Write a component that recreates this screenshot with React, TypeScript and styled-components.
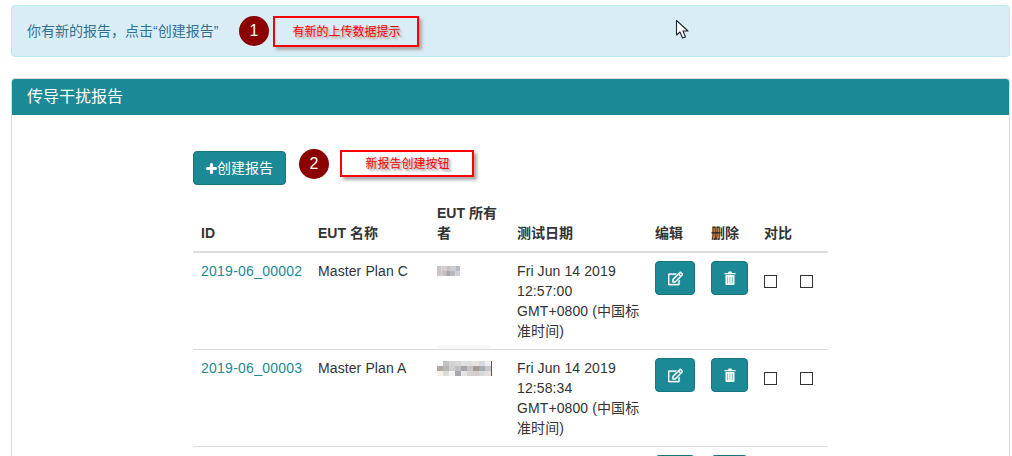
import styled, { createGlobalStyle } from 'styled-components';
import { FaPlus, FaRegEdit } from 'react-icons/fa';

const teal = '#1b8a96';

const GlobalStyle = createGlobalStyle`
  html, body {
    margin: 0;
    height: 456px;
    overflow: hidden;
    background: #fff;
    font-family: "Liberation Sans", "Noto Sans CJK SC", sans-serif;
    font-size: 14px;
    line-height: 20px;
    color: #333;
  }
  * { box-sizing: border-box; }
`;

const Page = styled.div`
  position: relative;
  height: 456px;
  overflow: hidden;
  padding: 5px 2px 0 11px;
`;

const Alert = styled.div`
  height: 52px;
  padding: 15px;
  background: #d9edf7;
  border: 1px solid #bce8f1;
  border-radius: 4px;
  color: #31708f;
  margin-bottom: 21px;
`;

const Panel = styled.section`
  border: 1px solid #ddd;
  border-bottom: 0;
  border-radius: 4px 4px 0 0;
  height: 400px;
`;

const PanelHeading = styled.h3`
  margin: 0;
  height: 36px;
  padding: 9px 15px;
  background: ${teal};
  border-radius: 3px 3px 0 0;
  color: #fff;
  font-size: 16px;
  font-weight: 400;
  line-height: 18px;
`;

const PanelBody = styled.div`
  padding: 36px 0 0 181px;
`;

const CreateButton = styled.button`
  display: flex;
  align-items: center;
  width: 93px;
  height: 34px;
  padding: 0 0 0 12px;
  margin-bottom: 10px;
  background: ${teal};
  border: 1px solid #16757f;
  border-radius: 4px;
  color: #fff;
  font: inherit;
  white-space: nowrap;
  svg { font-size: 11px; flex: none; stroke: currentColor; stroke-width: 50px; }
`;

const Table = styled.table`
  width: 635px;
  table-layout: fixed;
  border-collapse: collapse;
  border-spacing: 0;
`;

const Th = styled.th`
  padding: 8px;
  text-align: left;
  vertical-align: bottom;
  border-bottom: 2px solid #ddd;
  font-weight: 700;
`;

const Td = styled.td`
  position: relative;
  padding: 8px;
  vertical-align: top;
  border-top: 1px solid #ddd;
  height: 97px;
  letter-spacing: 0.1px;
`;

const DateCell = styled(Td)`
  padding-right: 4px;
`;

const ReportLink = styled.a`
  color: ${teal};
  text-decoration: none;
  letter-spacing: 0.25px;
  white-space: nowrap;
`;

const IconButton = styled.button<{ $width: number }>`
  display: flex;
  align-items: center;
  justify-content: center;
  width: ${(p) => p.$width}px;
  height: 34px;
  padding: 0;
  background: ${teal};
  border: 1px solid #16757f;
  border-radius: 4px;
  color: #fff;
  svg.edit { font-size: 15px; stroke: currentColor; stroke-width: 12px; }
`;

const CheckGroup = styled.div`
  display: flex;
  gap: 23px;
  margin-top: 14px;
`;

const Check = styled.span`
  width: 13px;
  height: 13px;
  border: 1px solid #333;
  background: #fff;
`;

const Mosaic = styled.svg<{ $top: number }>`
  display: block;
  margin-top: ${(p) => p.$top}px;
`;

// pale band left by the blur box just above the row line
const Smudge = styled.span`
  position: absolute;
  left: 8px;
  bottom: 0;
  width: 54px;
  height: 4px;
  background: #f8f8f8;
`;

const Badge = styled.span<{ $x: number; $y: number }>`
  position: absolute;
  left: ${(p) => p.$x}px;
  top: ${(p) => p.$y}px;
  width: 30px;
  height: 30px;
  border-radius: 50%;
  background: #8b0000;
  color: #fff;
  font-size: 16px;
  line-height: 29px;
  text-align: center;
`;

const Note = styled.div<{ $x: number; $y: number; $w: number; $h: number }>`
  position: absolute;
  left: ${(p) => p.$x}px;
  top: ${(p) => p.$y}px;
  width: ${(p) => p.$w}px;
  height: ${(p) => p.$h}px;
  padding: 1px 0 0 1px;
  border: 2px solid #f00;
  box-shadow: 3px 3px 3px #a9a9a9;
  color: #f00;
  font-size: 12px;
  line-height: ${(p) => p.$h - 4}px;
  text-align: center;
  text-shadow: 1px 1px 0 #c4c4c4, 2px 2px 1px #c4c4c4, 3px 3px 2px #ccc;
`;

const Cursor = styled.svg`
  position: absolute;
  left: 675px;
  top: 19px;
`;

const rows = [
  { id: '2019-06_00002', name: 'Master Plan C', time: '12:57:00', owner: 'short' },
  { id: '2019-06_00003', name: 'Master Plan A', time: '12:58:34', owner: 'long' },
];

const shortCells = ['#c9c5c4', '#d4cfcf', '#c8bfc0', '#c5ced2', '#bdb9c0', '#cbc6c4', '#c6c1c0', '#aca5a9', '#b3b8bb', '#ccced4'];
const longCells = [
  '#fafafa', '#bfc3c8', '#d5d2d2', '#d8d5d5', '#e0e0e3', '#dfdfe2', '#e6e2de', '#d6dae0', '#eeeeee',
  '#b0a8a4', '#b5b5b8', '#cfcccc', '#c0bfc2', '#a5a5ab', '#c5c3c3', '#a69a94', '#a7adb3', '#c9c7c5',
  '#f5f0e8', '#d9ddd6', '#f2f2f2', '#aaa6b0', '#e2e4e6', '#d6d2d0', '#d2cfcd', '#d8d8d8', '#e2e0dc',
];

function OwnerMosaic({ kind }: { kind: string }) {
  const short = kind === 'short';
  const cells = short ? shortCells : longCells;
  const cols = short ? 5 : 9;
  const w = short ? 4.6 : 6;
  const h = 5;
  return (
    <Mosaic $top={short ? 5 : 3} width={cols * w + 2} height={(cells.length / cols) * h}>
      {cells.map((fill, i) => (
        <rect
          key={i}
          x={(i % cols) * w}
          y={Math.floor(i / cols) * h}
          width={w}
          height={h}
          fill={fill}
        />
      ))}
      {!short && <rect x={54} y={0} width={1} height={15} fill="#3a5a8c" />}
    </Mosaic>
  );
}

function TrashIcon() {
  return (
    <svg width="12" height="14" viewBox="0 0 12 14">
      <path d="M4 2 L4.6 0.6 H7.4 L8 2 H11.5 V3.2 H0.5 V2 Z" fill="currentColor" />
      <path d="M1.5 4 H10.5 V13 Q10.5 14 9.5 14 H2.5 Q1.5 14 1.5 13 Z" fill="currentColor" />
      <path d="M3.6 5.5 V12.4 M6 5.5 V12.4 M8.4 5.5 V12.4" stroke="#7fc4cc" strokeWidth="1" />
    </svg>
  );
}

function Actions() {
  return (
    <>
      <Td>
        <IconButton $width={40}>
          <FaRegEdit className="edit" />
        </IconButton>
      </Td>
      <Td>
        <IconButton $width={37}>
          <TrashIcon />
        </IconButton>
      </Td>
      <Td>
        <CheckGroup>
          <Check />
          <Check />
        </CheckGroup>
      </Td>
    </>
  );
}

export default function App() {
  return (
    <>
      <GlobalStyle />
      <Page>
        <Alert>你有新的报告，点击“创建报告”</Alert>
        <Panel>
          <PanelHeading>传导干扰报告</PanelHeading>
          <PanelBody>
            <CreateButton>
              <FaPlus />
              创建报告
            </CreateButton>
            <Table>
              <colgroup>
                <col width={117} />
                <col width={119} />
                <col width={80} />
                <col width={138} />
                <col width={56} />
                <col width={53} />
                <col width={72} />
              </colgroup>
              <thead>
                <tr>
                  <Th>ID</Th>
                  <Th>EUT 名称</Th>
                  <Th>EUT 所有者</Th>
                  <Th>测试日期</Th>
                  <Th>编辑</Th>
                  <Th>删除</Th>
                  <Th>对比</Th>
                </tr>
              </thead>
              <tbody>
                {rows.map((row) => (
                  <tr key={row.id}>
                    <Td>
                      <ReportLink href="#">{row.id}</ReportLink>
                    </Td>
                    <Td>{row.name}</Td>
                    <Td>
                      <OwnerMosaic kind={row.owner} />
                      {row.owner === 'short' && <Smudge />}
                    </Td>
                    <DateCell>
                      Fri Jun 14 2019 {row.time} GMT+0800 (中国标准时间)
                    </DateCell>
                    <Actions />
                  </tr>
                ))}
                <tr>
                  <Td />
                  <Td />
                  <Td />
                  <Td />
                  <Actions />
                </tr>
              </tbody>
            </Table>
          </PanelBody>
        </Panel>

        <Badge $x={239} $y={16}>1</Badge>
        <Note $x={273} $y={16} $w={146} $h={31}>有新的上传数据提示</Note>
        <Badge $x={299} $y={149}>2</Badge>
        <Note $x={340} $y={150} $w={134} $h={27}>新报告创建按钮</Note>
        <Cursor width="16" height="21" viewBox="0 0 16 21">
          <path
            d="M1.5 1.5 V16 L5 13 L7.5 19 L10.5 18 L8 12 H13 Z"
            fill="#fff"
            stroke="#1c2430"
            strokeWidth="1.1"
            strokeLinejoin="round"
          />
        </Cursor>
      </Page>
    </>
  );
}
